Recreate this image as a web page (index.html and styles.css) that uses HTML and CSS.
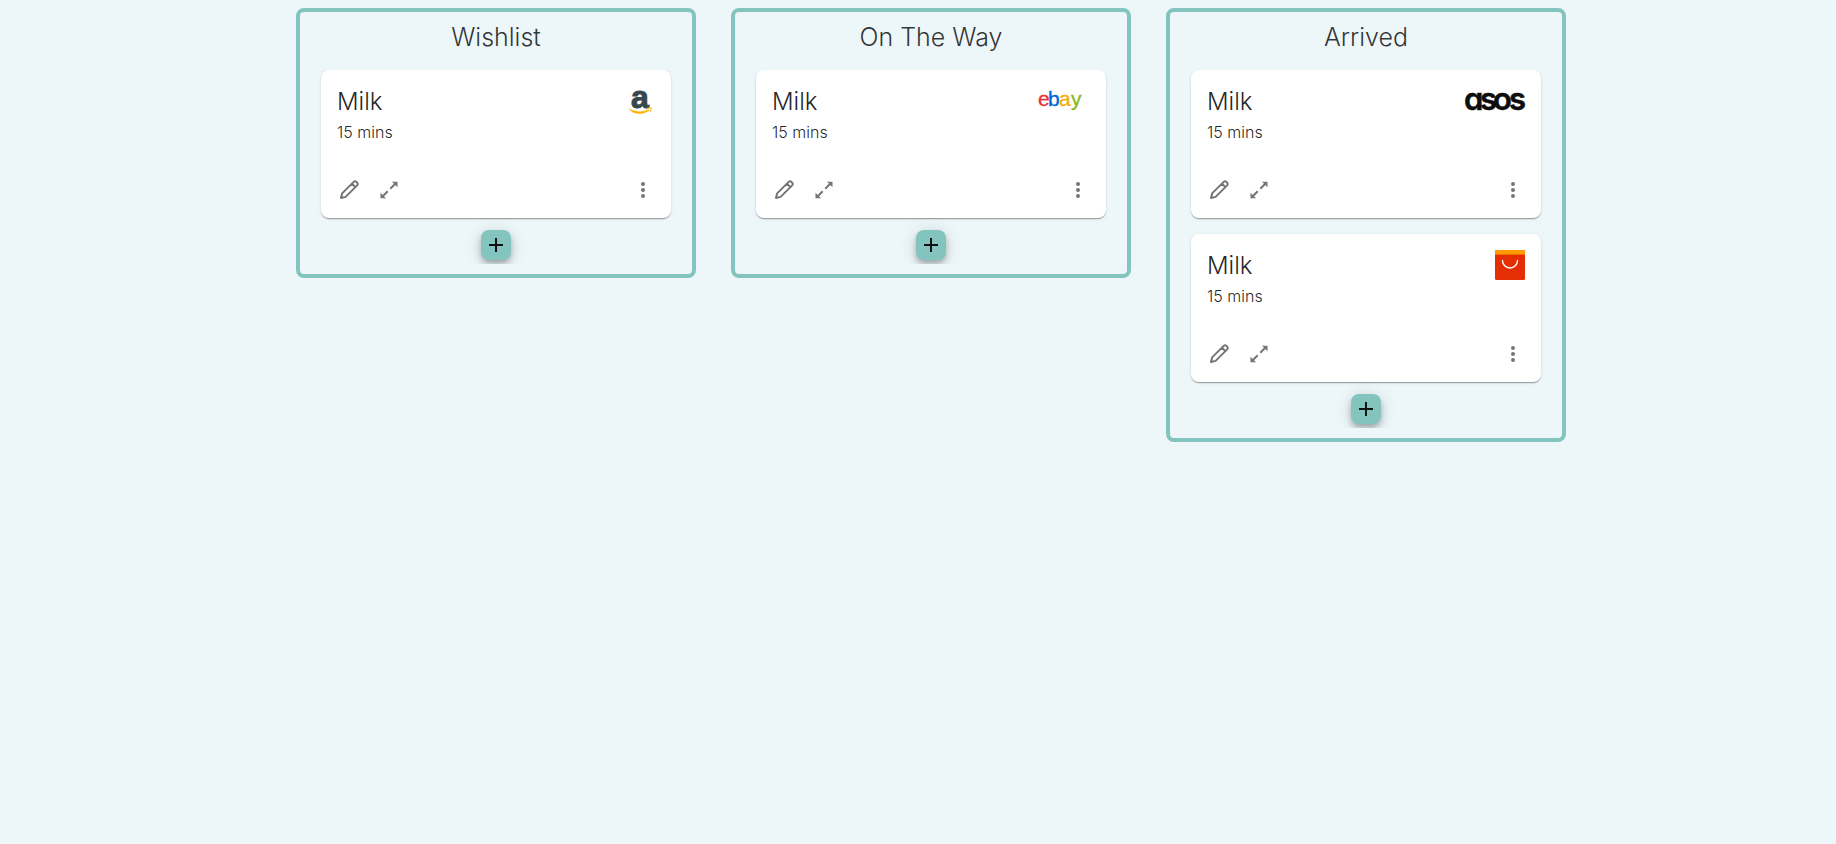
FILE: index.html
```html
<!DOCTYPE html>
<html lang="en">
<head>
<meta charset="utf-8">
<meta name="viewport" content="width=device-width, initial-scale=1">
<title>Orders board</title>
<link rel="stylesheet" href="styles.css">
</head>
<body>
<svg class="sprite" aria-hidden="true">
  <symbol id="pencil" viewBox="0 0 24 24"><path d="M4 20l1.100-4.600L16.700 3.900a1.900 1.900 0 0 1 2.700 0l.8.800a1.900 1.900 0 0 1 0 2.700L8.600 18.900zM15 5.700l3.400 3.400" fill="none" stroke="currentColor" stroke-width="2" stroke-linejoin="round"/></symbol>
  <symbol id="expand" viewBox="0 0 24 24"><path d="M13.300 10.700L18.500 5.500M10.700 13.300L5.500 18.500" fill="none" stroke="currentColor" stroke-width="2"/><path d="M15 3.700h5.500v5.500zM3.500 14.800v5.500h5.500z" fill="currentColor"/></symbol>
  <symbol id="more" viewBox="0 0 24 24"><g fill="currentColor"><circle cx="12" cy="6" r="2"/><circle cx="12" cy="12" r="2"/><circle cx="12" cy="18" r="2"/></g></symbol>
  <symbol id="plus" viewBox="0 0 24 24"><path d="M5 12h14M12 5v14" fill="none" stroke="currentColor" stroke-width="2"/></symbol>
</svg>
<main class="board">
  <section class="column">
    <h2 class="column-title">Wishlist</h2>
    <article class="card">
      <div class="card-content">
        <div><h3 class="card-title">Milk</h3><p class="card-time">15 mins</p></div>
        <svg class="logo" viewBox="0 0 30 30" role="img" aria-label="Amazon">
          <text class="amazon-letter" x="6" y="22">a</text>
          <path d="M3.300 22q4 3 10 3.600q6 .2 10.500-2.400l.8 1q-5 3.700-11.300 3.600Q7 27.500 3.300 22z" fill="#ffb300"/>
          <path d="M21.800 22.300q3.200-.8 4.500-.2q.2 1.900-1.500 4" fill="none" stroke="#ffb300"/>
        </svg>
      </div>
      <div class="card-actions">
        <button class="icon-button" aria-label="Edit"><svg class="icon"><use href="#pencil"/></svg></button>
        <button class="icon-button" aria-label="Expand"><svg class="icon"><use href="#expand"/></svg></button>
        <button class="icon-button more" aria-label="More"><svg class="icon"><use href="#more"/></svg></button>
      </div>
    </article>
    <div class="column-footer"><button class="add" aria-label="Add item"><svg class="add-icon"><use href="#plus"/></svg></button></div>
  </section>
  <section class="column">
    <h2 class="column-title">On The Way</h2>
    <article class="card">
      <div class="card-content">
        <div><h3 class="card-title">Milk</h3><p class="card-time">15 mins</p></div>
        <svg class="logo wide" viewBox="0 0 60 30" role="img" aria-label="eBay">
          <text class="ebay-letters" y="20"><tspan x="8" fill="#e53238" stroke="#e53238">e</tspan><tspan x="18" fill="#0064d2" stroke="#0064d2">b</tspan><tspan x="29" fill="#f5af02" stroke="#f5af02">a</tspan><tspan x="41" fill="#86b817" stroke="#86b817">y</tspan></text>
        </svg>
      </div>
      <div class="card-actions">
        <button class="icon-button" aria-label="Edit"><svg class="icon"><use href="#pencil"/></svg></button>
        <button class="icon-button" aria-label="Expand"><svg class="icon"><use href="#expand"/></svg></button>
        <button class="icon-button more" aria-label="More"><svg class="icon"><use href="#more"/></svg></button>
      </div>
    </article>
    <div class="column-footer"><button class="add" aria-label="Add item"><svg class="add-icon"><use href="#plus"/></svg></button></div>
  </section>
  <section class="column">
    <h2 class="column-title">Arrived</h2>
    <article class="card">
      <div class="card-content">
        <div><h3 class="card-title">Milk</h3><p class="card-time">15 mins</p></div>
        <svg class="logo wide" viewBox="0 0 60 30" role="img" aria-label="ASOS">
          <text class="asos-letters" y="24" x="-1 15 28 44">asos</text>
        </svg>
      </div>
      <div class="card-actions">
        <button class="icon-button" aria-label="Edit"><svg class="icon"><use href="#pencil"/></svg></button>
        <button class="icon-button" aria-label="Expand"><svg class="icon"><use href="#expand"/></svg></button>
        <button class="icon-button more" aria-label="More"><svg class="icon"><use href="#more"/></svg></button>
      </div>
    </article>
    <article class="card">
      <div class="card-content">
        <div><h3 class="card-title">Milk</h3><p class="card-time">15 mins</p></div>
        <svg class="logo" viewBox="0 0 30 30" role="img" aria-label="AliExpress">
          <rect width="30" height="30" rx="1.500" fill="#e62e04"/><path d="M0 4V1.500Q0 0 1.500 0h27Q30 0 30 1.500V4z" fill="#ff9a00"/><path d="M0 4h30v1H0z" fill="#f07000"/>
          <path d="M7.500 10.500a7.500 7.500 0 0 0 15 0" fill="none" stroke="#fff" stroke-width="1.400" stroke-linecap="round"/>
        </svg>
      </div>
      <div class="card-actions">
        <button class="icon-button" aria-label="Edit"><svg class="icon"><use href="#pencil"/></svg></button>
        <button class="icon-button" aria-label="Expand"><svg class="icon"><use href="#expand"/></svg></button>
        <button class="icon-button more" aria-label="More"><svg class="icon"><use href="#more"/></svg></button>
      </div>
    </article>
    <div class="column-footer"><button class="add" aria-label="Add item"><svg class="add-icon"><use href="#plus"/></svg></button></div>
  </section>
</main>
</body>
</html>
```
FILE: styles.css
```css
* { box-sizing: border-box; }
body {
  margin: 0;
  background: #edf6f9;
  font-family: Inter, "Liberation Sans", sans-serif;
  font-weight: 300;
  color: rgba(0, 0, 0, 0.87);
}
.sprite { display: none; }
.board {
  display: flex;
  flex-wrap: wrap;
  justify-content: center;
  align-items: flex-start;
  gap: 35px;
  padding: 8px 0 8px 26px;
}
.column {
  width: 400px;
  max-width: 100%;
  padding: 10px 0;
  border: 4px solid #83c5be;
  border-radius: 8px;
}
.column-title {
  margin: 0 0 18px;
  font-size: 25px;
  font-weight: 300;
  line-height: 30px;
  text-align: center;
  color: rgba(0, 0, 0, 0.8);
}
.card {
  margin: 0 21px;
  background: #fff;
  border-radius: 8px;
  box-shadow: 0 2px 1px -1px rgba(0, 0, 0, 0.2), 0 1px 1px rgba(0, 0, 0, 0.14), 0 1px 3px rgba(0, 0, 0, 0.12);
}
.card + .card { margin-top: 16px; }
.card-content {
  display: flex;
  justify-content: space-between;
  align-items: flex-start;
  padding: 16px 16px 18px;
}
.card-title { margin: 0; font-size: 24px; font-weight: 300; line-height: 32px; }
.card-time { margin: 0; padding-top: 2px; font-size: 16px; line-height: 24px; }
.logo { width: 30px; height: 30px; overflow: visible; }
.logo.wide { width: 60px; }
.amazon-letter { font: 700 32px "Liberation Sans", Arial, sans-serif; fill: #37474f; stroke: #37474f; stroke-width: 1px; }
.ebay-letters { font: 400 21px "Liberation Sans", Arial, sans-serif; stroke-width: 0.3px; }
.asos-letters { font: 600 31px Inter, sans-serif; font-feature-settings: "cv11"; fill: #0d0d0d; stroke: #0d0d0d; stroke-width: 0.5px; }
.card-actions { display: flex; padding: 8px; }
.icon-button {
  display: flex;
  padding: 8px;
  border: 0;
  background: none;
  color: #757575;
  cursor: pointer;
}
.more { margin-left: auto; }
.icon { width: 24px; height: 24px; }
.column-footer { display: flex; justify-content: center; overflow: hidden; padding: 12px 0 4px; }
.add {
  display: grid;
  place-items: center;
  width: 30px;
  height: 30px;
  padding: 0;
  border: 0;
  border-radius: 8px;
  background: #83c5be;
  color: #111;
  box-shadow: 0 3px 5px -1px rgba(0, 0, 0, 0.2), 0 6px 10px rgba(0, 0, 0, 0.14), 0 1px 18px rgba(0, 0, 0, 0.12);
  cursor: pointer;
}
.add-icon { width: 24px; height: 24px; }
```
